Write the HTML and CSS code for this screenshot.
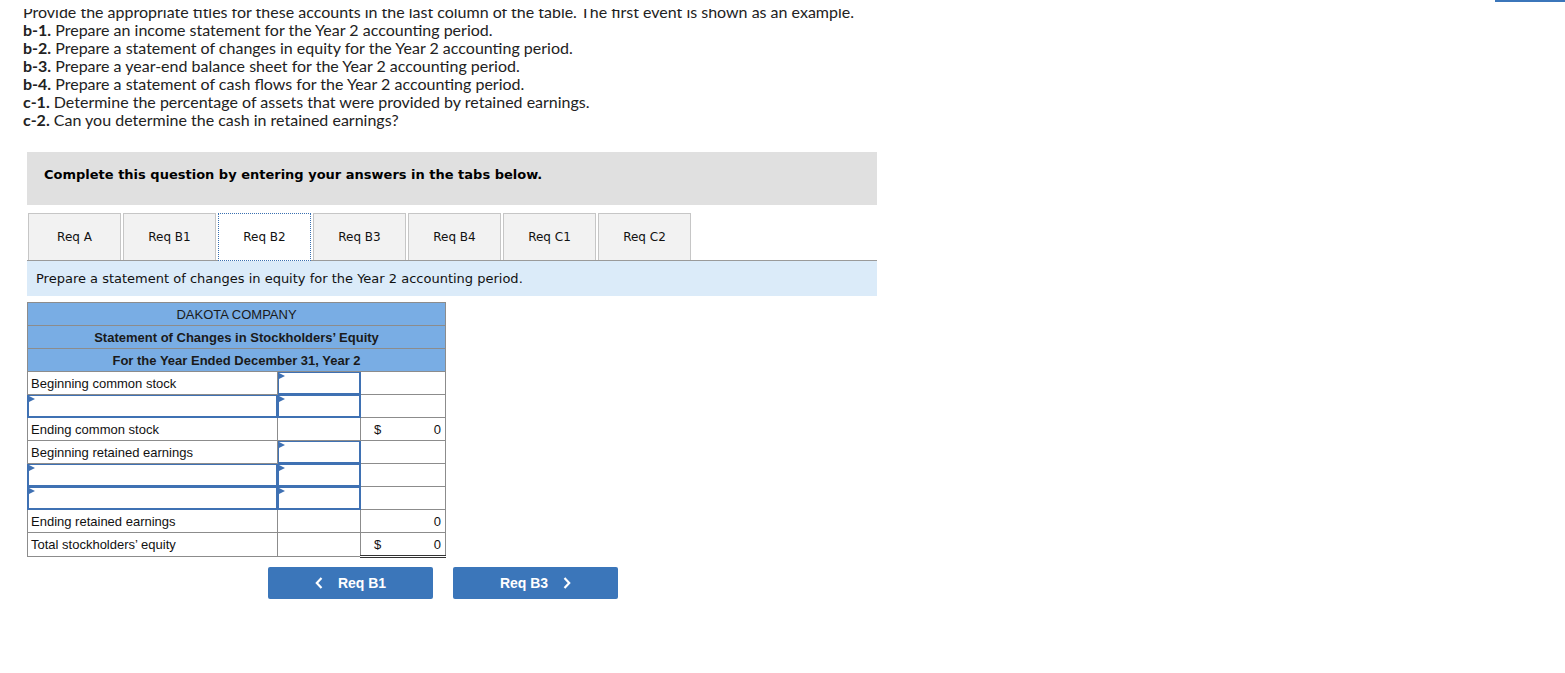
FILE: index.html
```html
<!DOCTYPE html>
<html>
<head>
<meta charset="utf-8">
<link rel="stylesheet" href="styles.css">
</head>
<body>
<div class="topbar"><span class="topbtn"></span></div>
<div class="page">
  <div class="intro">
    <p>Provide the appropriate titles for these accounts in the last column of the table. The first event is shown as an example.</p>
    <p><b>b-1.</b> Prepare an income statement for the Year 2 accounting period.</p>
    <p><b>b-2.</b> Prepare a statement of changes in equity for the Year 2 accounting period.</p>
    <p><b>b-3.</b> Prepare a year-end balance sheet for the Year 2 accounting period.</p>
    <p><b>b-4.</b> Prepare a statement of cash flows for the Year 2 accounting period.</p>
    <p><b>c-1.</b> Determine the percentage of assets that were provided by retained earnings.</p>
    <p><b>c-2.</b> Can you determine the cash in retained earnings?</p>
  </div>

  <div class="panel">
    <div class="banner">Complete this question by entering your answers in the tabs below.</div>
    <div class="tabs">
      <div class="tab">Req A</div>
      <div class="tab">Req B1</div>
      <div class="tab active">Req B2</div>
      <div class="tab">Req B3</div>
      <div class="tab">Req B4</div>
      <div class="tab">Req C1</div>
      <div class="tab">Req C2</div>
    </div>
    <div class="prompt">Prepare a statement of changes in equity for the Year 2 accounting period.</div>

    <table class="stmt">
      <colgroup><col class="c1"><col class="c2"><col class="c3"></colgroup>
      <tr class="hd"><td colspan="3">DAKOTA COMPANY</td></tr>
      <tr class="hd"><td colspan="3">Statement of Changes in Stockholders’ Equity</td></tr>
      <tr class="hd"><td colspan="3">For the Year Ended December 31, Year 2</td></tr>
      <tr>
        <td class="lbl">Beginning common stock</td>
        <td class="inp"><span class="tri"></span></td>
        <td></td>
      </tr>
      <tr>
        <td class="inp"><span class="tri"></span></td>
        <td class="inp"><span class="tri"></span></td>
        <td></td>
      </tr>
      <tr>
        <td class="lbl">Ending common stock</td>
        <td class="sumtop"></td>
        <td class="amt"><span>$</span><span>0</span></td>
      </tr>
      <tr>
        <td class="lbl">Beginning retained earnings</td>
        <td class="inp"><span class="tri"></span></td>
        <td></td>
      </tr>
      <tr>
        <td class="inp"><span class="tri"></span></td>
        <td class="inp"><span class="tri"></span></td>
        <td></td>
      </tr>
      <tr>
        <td class="inp"><span class="tri"></span></td>
        <td class="inp"><span class="tri"></span></td>
        <td></td>
      </tr>
      <tr>
        <td class="lbl">Ending retained earnings</td>
        <td class="sumtop"></td>
        <td class="amt"><span></span><span>0</span></td>
      </tr>
      <tr>
        <td class="lbl">Total stockholders’ equity</td>
        <td></td>
        <td class="amt total"><span>$</span><span>0</span></td>
      </tr>
    </table>

    <div class="nav">
      <button class="navbtn"><svg class="chev" width="8" height="12" viewBox="0 0 8 12"><path d="M6.5 1 L1.8 6 L6.5 11" fill="none" stroke="#fff" stroke-width="2.2"/></svg> Req B1</button>
      <button class="navbtn">Req B3 <svg class="chev" width="8" height="12" viewBox="0 0 8 12"><path d="M1.5 1 L6.2 6 L1.5 11" fill="none" stroke="#fff" stroke-width="2.2"/></svg></button>
    </div>
  </div>
</div>
</body>
</html>
```

FILE: styles.css
```css
html, body {
  margin: 0;
  padding: 0;
  background: #fff;
}

.topbar {
  position: fixed;
  top: 0;
  left: 0;
  right: 0;
  height: 9px;
  background: #fff;
  z-index: 5;
}

.topbar .topbtn {
  position: absolute;
  right: 0;
  top: 0;
  width: 70px;
  height: 2px;
  background: #3b76ba;
}

.page {
  padding: 3px 0 0 23px;
}

.intro {
  font-family: Lato, "Open Sans", sans-serif;
  font-size: 16px;
  line-height: 18px;
  color: #222;
}

.intro p {
  margin: 0;
  white-space: nowrap;
}

.intro b {
  font-weight: 700;
}

.panel {
  margin-top: 23px;
  margin-left: 4px;
  width: 850px;
}

.banner {
  background: #e0e0e0;
  height: 53px;
  box-sizing: border-box;
  padding: 15px 0 0 17px;
  font-family: Verdana, "DejaVu Sans", sans-serif;
  font-weight: bold;
  font-size: 13px;
  line-height: 16px;
  color: #000;
}

.tabs {
  display: flex;
  gap: 2px;
  margin-top: 8px;
  padding-left: 1px;
  border-bottom: 1px solid #9a9a9a;
  height: 47px;
}

.tab {
  width: 91px;
  height: 46px;
  border: 1px solid #c6c6c6;
  border-bottom: none;
  background: #f2f2f2;
  display: flex;
  align-items: center;
  justify-content: center;
  font-family: Verdana, "DejaVu Sans", sans-serif;
  font-size: 12px;
  color: #111;
}

.tab.active {
  background: #fff;
  border: 1px dotted #3a70b0;
  outline: 1px dotted #3a70b0;
  outline-offset: -1px;
  height: 46px;
  margin-bottom: -1px;
}

.prompt {
  background: #dbebf9;
  height: 35px;
  padding-left: 9px;
  display: flex;
  align-items: center;
  font-family: Verdana, "DejaVu Sans", sans-serif;
  font-size: 13px;
  color: #111;
}

.stmt {
  margin-top: 6px;
  border-collapse: collapse;
  font-family: "Liberation Sans", Arial, sans-serif;
  font-size: 13px;
  color: #111;
  table-layout: fixed;
  width: 418px;
}

.stmt col.c1 { width: 250px; }
.stmt col.c2 { width: 83px; }
.stmt col.c3 { width: 85px; }

.stmt td {
  border: 1px solid #8c8c8c;
  height: 22px;
  padding: 0;
  position: relative;
}

.stmt tr.hd td {
  background: #79ade4;
  text-align: center;
  color: #1a1a1a;
}

.stmt tr.hd:nth-child(2) td,
.stmt tr.hd:nth-child(3) td {
  font-weight: bold;
}

.stmt td.lbl {
  padding-left: 3px;
}

.stmt td.inp {
  border: 1px solid #3f71b3;
  box-shadow: inset 0 0 0 1px #3f71b3;
  background: #fff;
}

.tri {
  position: absolute;
  left: 1px;
  top: 1px;
  width: 0;
  height: 0;
  border-top: 3px solid transparent;
  border-bottom: 3px solid transparent;
  border-left: 6px solid #3f71b3;
}

.stmt td.sumtop {
  border-top: 1px solid #000;
}

.stmt td.amt {
  padding: 0 4px 0 13px;
}

.stmt td.amt span {
  display: inline-block;
}

.stmt td.amt span:first-child {
  width: 20px;
}

.stmt td.amt span:last-child {
  float: right;
}

.stmt td.total {
  border-bottom: 3px double #333;
}

.nav {
  display: flex;
  gap: 20px;
  margin-top: 9px;
  margin-left: 241px;
}

.navbtn {
  width: 165px;
  height: 32px;
  border: none;
  border-radius: 2px;
  background: #3b76ba;
  color: #fff;
  font-family: "Liberation Sans", Arial, sans-serif;
  font-weight: bold;
  font-size: 14px;
  display: flex;
  align-items: center;
  justify-content: center;
  gap: 15px;
  padding: 0;
}

.chev {
  display: block;
}
```
